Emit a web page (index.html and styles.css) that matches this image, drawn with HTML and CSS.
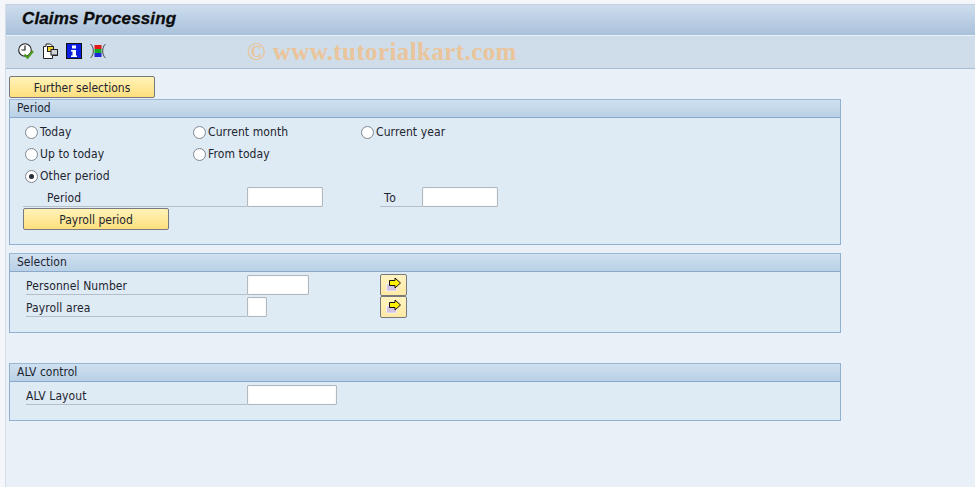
FILE: index.html
```html
<!DOCTYPE html>
<html lang="en">
<head>
  <meta charset="UTF-8" />
  <title>Claims Processing</title>
  <link rel="stylesheet" href="styles.css">
</head>
<body>
  <div class="window">
    <div class="title-bar"><h1>Claims Processing</h1></div>
    <div class="toolbar">
      <svg class="tool" viewBox="0 0 16 16"><circle cx="7" cy="7" r="6.300" fill="#fff" stroke="#222" stroke-width="1.100"/><path d="M7 2.500V7H3.500" fill="none" stroke="#222" stroke-width="1.200"/><path d="M6.500 11.500l3 3.200 5.500-6.700" fill="none" stroke="#4a9a1e" stroke-width="2.200"/></svg>
      <svg class="tool" viewBox="0 0 16 16"><path d="M1.500 3.500h2.500v-2.500h4.500l2 2v3.500h5v6h-5v3h-9z" fill="#fff" stroke="#222"/><rect x="5.500" y="3.500" width="6" height="5" fill="#f4d430" stroke="#222"/><rect x="9" y="6.500" width="6.500" height="5.500" fill="#cfd3d8" stroke="#222"/></svg>
      <svg class="tool" viewBox="0 0 16 16"><rect width="16" height="16" fill="#111"/><rect x="1" y="1" width="14" height="14" fill="#0a1ee0"/><path d="M6 2.500h4v3H6zM5 7h5v5.500h1V14H5v-1.500h1.500V8.500H5z" fill="#fff"/></svg>
      <svg class="tool" viewBox="0 0 16 16"><path d="M0.500 1c2 2 2.800 4 2.800 7s-.8 5-2.800 7M15.500 1c-2 2-2.800 4-2.800 7s.8 5 2.800 7" fill="none" stroke="#222" stroke-width=".8"/><rect x="4.500" y="2" width="7" height="4" fill="#e01818"/><rect x="4.500" y="6" width="7" height="4" fill="#18a828"/><rect x="4.500" y="10" width="7" height="4" fill="#1828d8"/></svg>
      <span class="watermark">© www.tutorialkart.com</span>
    </div>

    <div class="content">
      <button class="btn further">Further selections</button>

      <section class="group period">
        <h2>Period</h2>
        <div class="radios">
          <label class="radio"><i></i>Today</label>
          <label class="radio"><i></i>Current month</label>
          <label class="radio"><i></i>Current year</label>
          <label class="radio"><i></i>Up to today</label>
          <label class="radio"><i></i>From today</label>
          <span></span>
          <label class="radio on"><i></i>Other period</label>
        </div>
        <div class="row period-row">
          <span class="lbl lbl-period">Period</span>
          <span class="input w76"></span>
          <span class="lbl lbl-to">To</span>
          <span class="input w76"></span>
        </div>
        <button class="btn payroll">Payroll period</button>
      </section>

      <section class="group selection">
        <h2>Selection</h2>
        <div class="row">
          <span class="lbl lbl-main">Personnel Number</span>
          <span class="input w62"></span>
          <span class="arrow-slot a1"><button class="arrow-btn"><svg viewBox="0 0 16 16"><rect x=".5" y="7" width="10" height="7" fill="#d2c3e2" stroke="#fff" stroke-width=".6"/><path d="M3.500 3.500h5.500V1l5.500 5-5.500 5V8.500H3.500z" fill="#ffee00" stroke="#111"/></svg></button></span>
        </div>
        <div class="row">
          <span class="lbl lbl-main">Payroll area</span>
          <span class="input w20"></span>
          <span class="arrow-slot a2"><button class="arrow-btn"><svg viewBox="0 0 16 16"><rect x=".5" y="7" width="10" height="7" fill="#d2c3e2" stroke="#fff" stroke-width=".6"/><path d="M3.500 3.500h5.500V1l5.500 5-5.500 5V8.500H3.500z" fill="#ffee00" stroke="#111"/></svg></button></span>
        </div>
      </section>

      <section class="group alv">
        <h2>ALV control</h2>
        <div class="row">
          <span class="lbl lbl-main">ALV Layout</span>
          <span class="input w90"></span>
        </div>
      </section>
    </div>
  </div>
</body>
</html>
```

FILE: styles.css
```css
* { box-sizing: border-box; }
html, body { height: 100%; }
body {
  margin: 0; padding: 4px 0 0 5px; background: #f4f6f9; overflow: hidden;
  font-family: "DejaVu Sans Condensed", "DejaVu Sans", sans-serif; font-size: 12px; color: #1c2530;
}
.window { height: 483px; background: #e9f0f8; border-left: 1px solid #d5dde6; }

.title-bar {
  height: 32px; padding: 2px 0 0 16px; border-top: 1px solid #c3d0de; border-bottom: 1px solid #eaf1f8;
  background: linear-gradient(#cddded, #a9c1da);
}
h1 {
  margin: 0; font: italic bold 17px "Liberation Sans", sans-serif; line-height: 24px; color: #0c0c0c;
  letter-spacing: .12px; -webkit-text-stroke: .3px #0c0c0c;
}
.toolbar {
  height: 33px; display: flex; align-items: center; gap: 8px; padding: 0 0 3px 12px;
  background: #cedde9; border-bottom: 1px solid #a9bccf;
}
.tool { width: 16px; height: 16px; }
.watermark {
  margin-left: 133px; padding-top: 2px; font: bold 25px "Liberation Serif", serif; color: #eac49a; letter-spacing: .4px;
}

.content { padding: 7px 0 0 3px; }
.btn {
  display: block; height: 22px; width: 146px; padding: 1px 0 0; font: inherit; color: #1c2530;
  border: 1px solid #77797c; border-radius: 2px; background: linear-gradient(#fff3b8, #ffdf7e);
}
.group {
  width: 832px; margin-top: 1px; background: #deeaf4; border: 1px solid #8fb0cf; border-top-color: #9ab8d4;
}
.group h2 {
  margin: 0; height: 18px; padding-left: 7px; font: inherit; line-height: 16px;
  background: linear-gradient(#cfe0f0, #b9d0e6); border-bottom: 1px solid #8aa9c8;
}
.period { height: 146px; }
.selection { height: 80px; margin-top: 8px; }
.alv { height: 58px; margin-top: 30px; }

.radios {
  display: grid; grid-template-columns: 168px 168px 1fr; grid-auto-rows: 22px;
  padding: 3px 0 0 15px;
}
.radio { display: flex; align-items: center; gap: 2px; letter-spacing: .1px; }
.radio i {
  width: 13px; height: 13px; border-radius: 50%; border: 1px solid #7f8890; background: #fff;
  display: flex; align-items: center; justify-content: center;
}
.radio.on i::after { content: ""; width: 5px; height: 5px; border-radius: 50%; background: #2a2f38; }

.row { display: flex; align-items: center; height: 22px; padding-left: 16px; }
.period-row { height: 21px; padding-left: 13px; margin-top: -1px; }
.selection .row:first-of-type, .alv .row { margin-top: 2px; }
.lbl { display: block; height: 20px; padding-top: 4px; line-height: 15px; border-bottom: 1px solid #b4bfca; letter-spacing: .1px; }
.lbl-main { width: 221px; }
.lbl-period { width: 224px; padding-left: 24px; }
.lbl-to { width: 42px; margin-left: 57px; padding-left: 4px; letter-spacing: .8px; }
.input {
  display: block; height: 20px; background: #fff; border: 1px solid #b3b8bd; box-shadow: inset 0 0 2px #e3e6ea; border-radius: 1px;
}
.w76 { width: 76px; }
.w62 { width: 62px; }
.w20 { width: 20px; }
.w90 { width: 90px; }
.payroll { margin: 1px 0 0 13px; }

.arrow-slot { display: block; }
.a1 { margin-left: 71px; }
.a2 { margin-left: 113px; }
.arrow-btn {
  display: flex; align-items: center; justify-content: center; width: 27px; height: 22px; padding: 0;
  border: 1px solid #77797c; border-radius: 2px; background: linear-gradient(#fff3c0, #ffe9a5);
}
.arrow-btn svg { width: 16px; height: 16px; }
```
